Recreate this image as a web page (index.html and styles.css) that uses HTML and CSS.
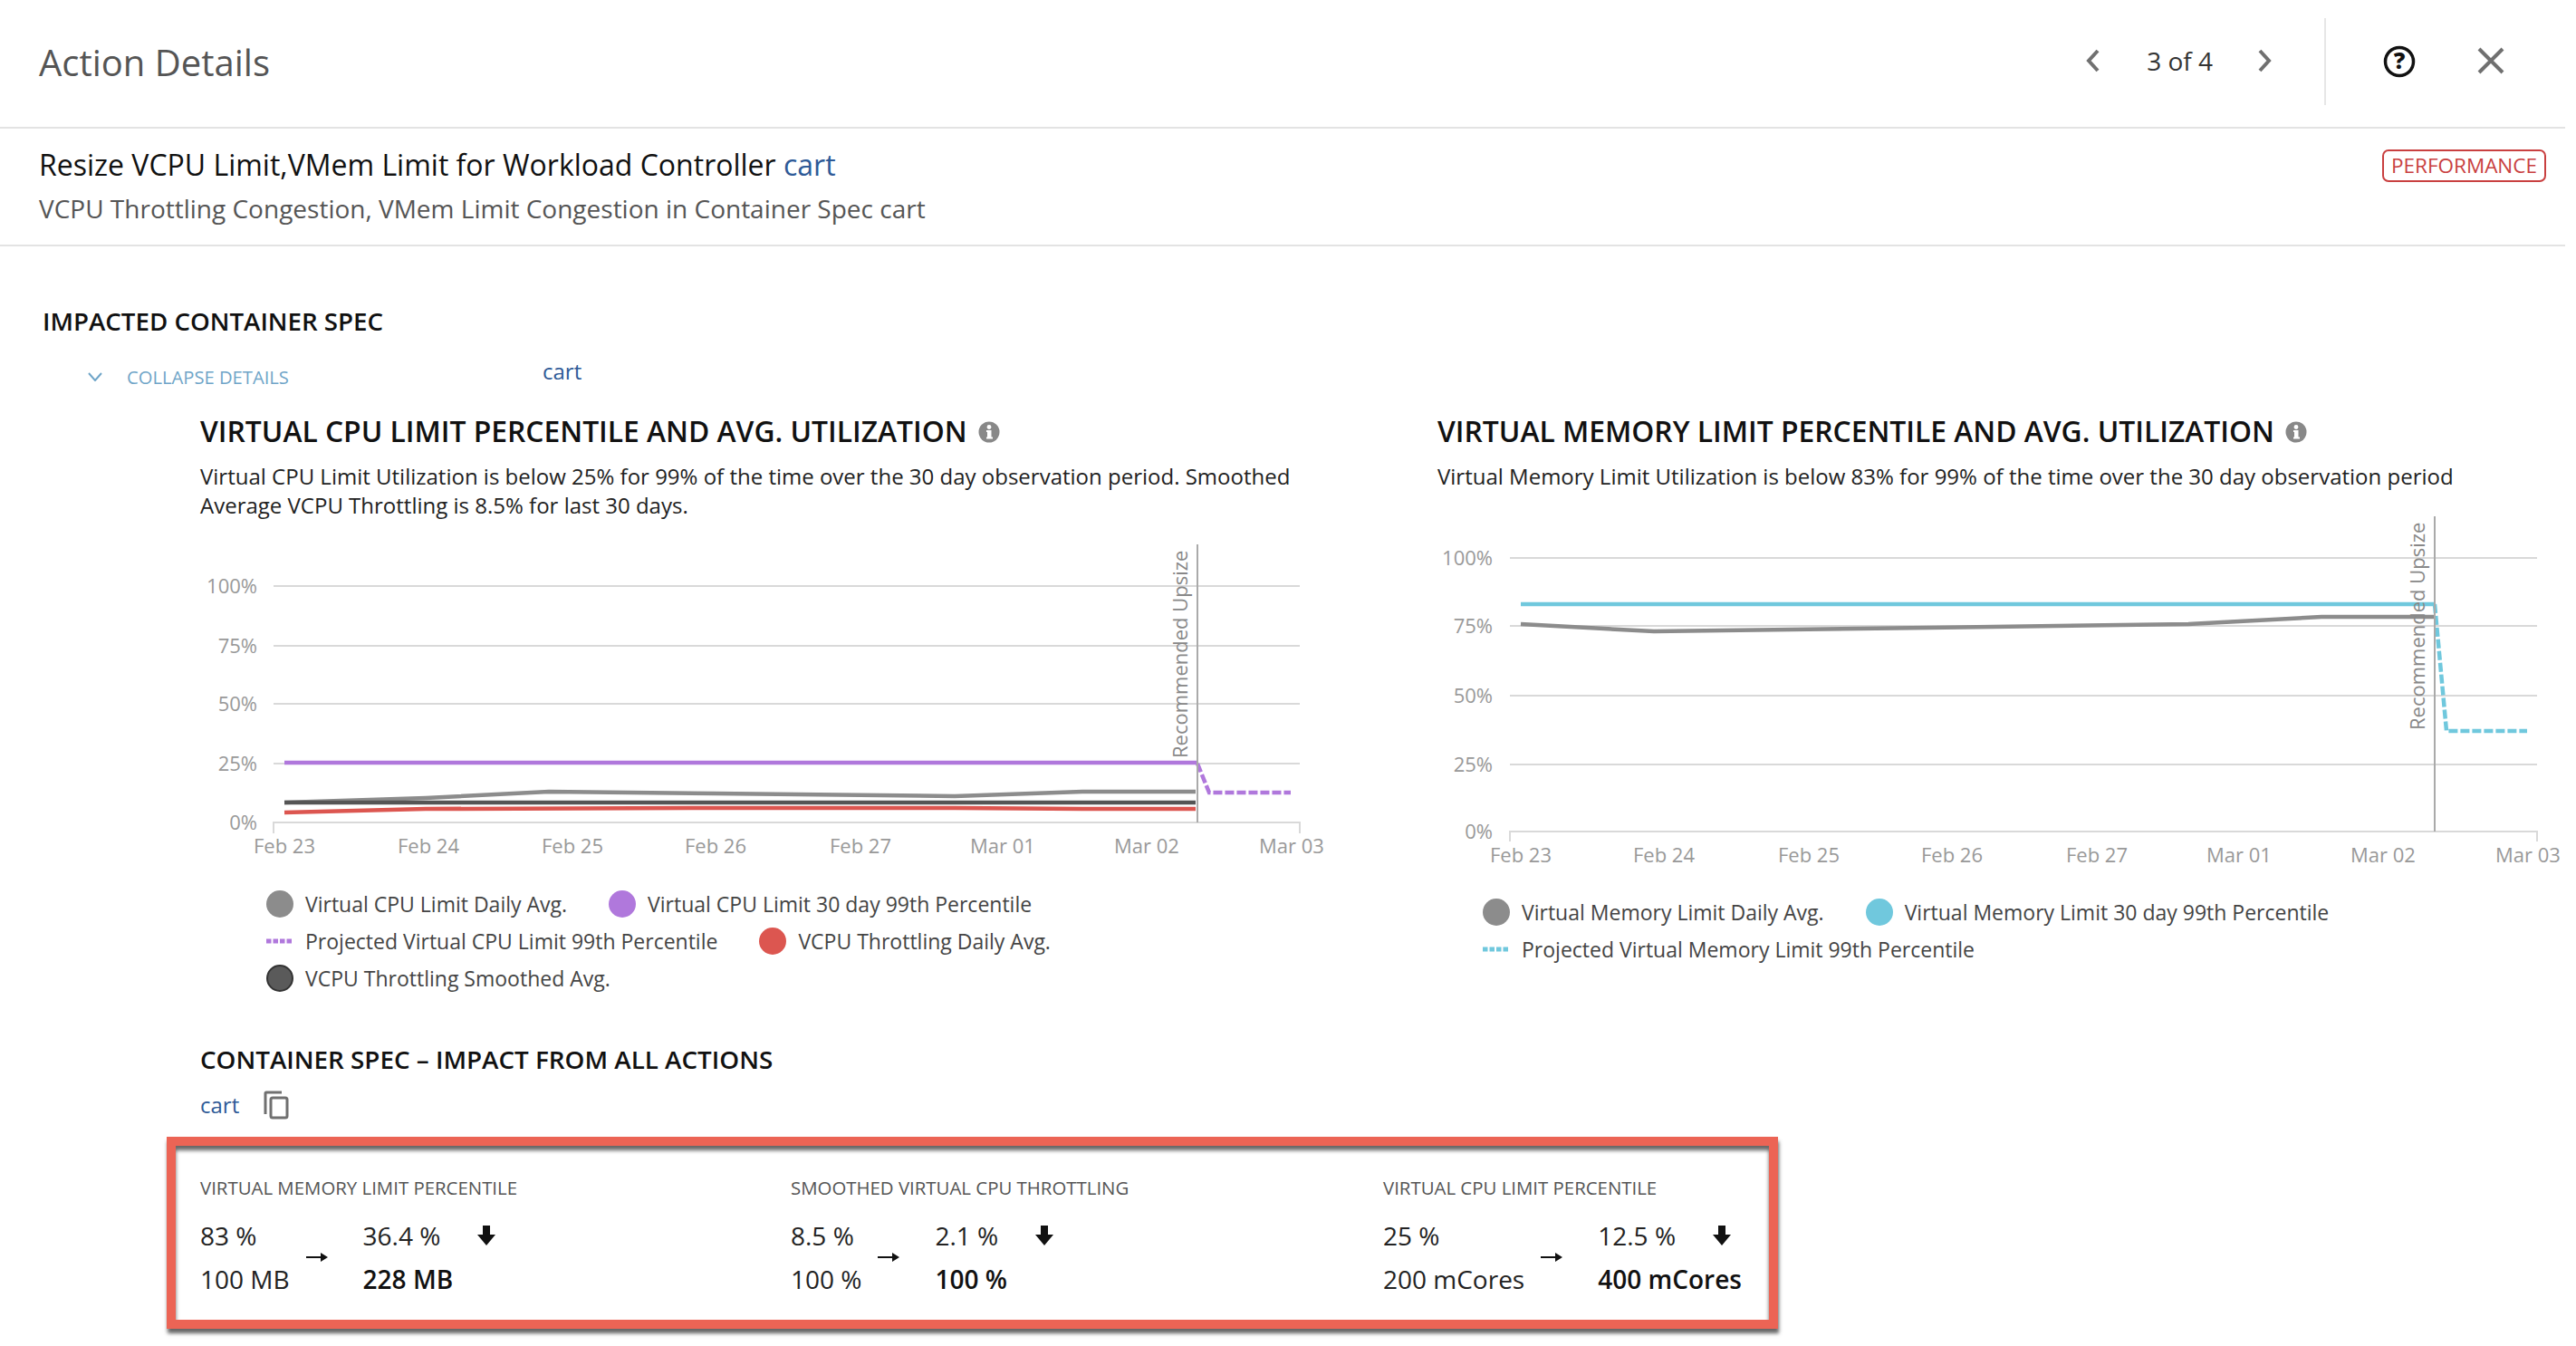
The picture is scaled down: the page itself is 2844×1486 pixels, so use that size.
FILE: index.html
```html
<!DOCTYPE html>
<html lang="en">
<head>
  <meta charset="UTF-8">
  <title>Action Details</title>
  <link rel="stylesheet" href="styles.css">
</head>
<body>
  <div class="page">
    <header class="top">
      <div class="top-title">Action Details</div>
      <div class="pager">
        <svg class="icon-chev" width="20" height="28" viewBox="0 0 20 28"><path d="M15 3 L5 14 L15 25" /></svg>
        <span class="pager-text">3 of 4</span>
        <svg class="icon-chev" width="20" height="28" viewBox="0 0 20 28"><path d="M5 3 L15 14 L5 25" /></svg>
      </div>
      <div class="top-divider"></div>
      <svg class="icon-help" width="36" height="36" viewBox="0 0 36 36">
        <circle cx="18" cy="18" r="15.5" />
        <text x="18" y="26">?</text>
      </svg>
      <svg class="icon-close" width="30" height="30" viewBox="0 0 30 30"><path d="M2 2 L28 28 M28 2 L2 28" /></svg>
    </header>

    <section class="summary">
      <div>
        <div class="summary-title">Resize VCPU Limit,VMem Limit for Workload Controller <a class="link">cart</a></div>
        <div class="summary-sub">VCPU Throttling Congestion, VMem Limit Congestion in Container Spec cart</div>
      </div>
      <span class="badge">PERFORMANCE</span>
    </section>

    <main class="content">
      <h3 class="section-head">IMPACTED CONTAINER SPEC</h3>
      <div class="collapse-row">
        <svg class="icon-down" width="16" height="10" viewBox="0 0 16 10"><path d="M1 1 L8 9 L15 1" /></svg>
        <span class="collapse-text">COLLAPSE DETAILS</span>
        <a class="link collapse-link">cart</a>
      </div>

      <div class="charts">
        <div class="chart-col">
          <h3 class="chart-title">VIRTUAL CPU LIMIT PERCENTILE AND AVG. UTILIZATION
            <svg class="icon-info" width="24" height="24" viewBox="0 0 24 24"><circle class="info-bg" cx="12" cy="12" r="11.5" /><rect x="10" y="10" width="4.5" height="9" /><rect x="9" y="10" width="3" height="2" /><rect x="9" y="17.5" width="7" height="2" /><circle cx="12" cy="6.5" r="2.4" /></svg>
          </h3>
          <p class="chart-desc">Virtual CPU Limit Utilization is below 25% for 99% of the time over the 30 day observation period. Smoothed Average VCPU Throttling is 8.5% for last 30 days.</p>
          <svg class="chart" width="1245" height="360" viewBox="221 590 1245 360">
            <g class="grid">
              <line x1="302" y1="648" x2="1435" y2="648" />
              <line x1="302" y1="714" x2="1435" y2="714" />
              <line x1="302" y1="778" x2="1435" y2="778" />
              <line x1="302" y1="844" x2="1435" y2="844" />
              <path d="M302 921 V909 H1435 V921" />
            </g>
            <g class="tick ytick">
              <text x="284" y="656">100%</text>
              <text x="284" y="722">75%</text>
              <text x="284" y="786">50%</text>
              <text x="284" y="852">25%</text>
              <text x="284" y="917">0%</text>
            </g>
            <g class="tick xtick">
              <text x="314" y="943">Feb 23</text>
              <text x="473" y="943">Feb 24</text>
              <text x="632" y="943">Feb 25</text>
              <text x="790" y="943">Feb 26</text>
              <text x="950" y="943">Feb 27</text>
              <text x="1107" y="943">Mar 01</text>
              <text x="1266" y="943">Mar 02</text>
              <text x="1426" y="943">Mar 03</text>
            </g>
            <path class="series s-gray" d="M314 887 L470 882 L606 875 L790 877 L1054 880 L1195 875 L1320 875" />
            <path class="series s-dark" d="M314 887 L1320 887" />
            <path class="series s-red" d="M314 898 L470 894 L790 893 L1054 893 L1195 894 L1320 894" />
            <path class="series s-purple" d="M314 843 L1322 843" />
            <path class="dash s-purple" d="M1322 844 L1335 876 L1425 876" />
            <line class="marker" x1="1322" y1="602" x2="1322" y2="909" />
            <text class="marker-text" transform="translate(1311 838) rotate(-90)">Recommended Upsize</text>
          </svg>
          <div class="legend legend-cpu">
            <div class="legend-item"><span class="dot c-gray"></span>Virtual CPU Limit Daily Avg.</div>
            <div class="legend-item"><span class="dot c-purple"></span>Virtual CPU Limit 30 day 99th Percentile</div>
            <div class="legend-item"><svg class="legend-dash" width="30" height="6" viewBox="0 0 30 6"><line class="s-purple" x1="0" y1="3" x2="30" y2="3" /></svg>Projected Virtual CPU Limit 99th Percentile</div>
            <div class="legend-item"><span class="dot c-red"></span>VCPU Throttling Daily Avg.</div>
            <div class="legend-item"><span class="dot c-dark"></span>VCPU Throttling Smoothed Avg.</div>
          </div>
        </div>

        <div class="chart-col">
          <h3 class="chart-title">VIRTUAL MEMORY LIMIT PERCENTILE AND AVG. UTILIZATION
            <svg class="icon-info" width="24" height="24" viewBox="0 0 24 24"><circle class="info-bg" cx="12" cy="12" r="11.5" /><rect x="10" y="10" width="4.5" height="9" /><rect x="9" y="10" width="3" height="2" /><rect x="9" y="17.5" width="7" height="2" /><circle cx="12" cy="6.5" r="2.4" /></svg>
          </h3>
          <p class="chart-desc">Virtual Memory Limit Utilization is below 83% for 99% of the time over the 30 day observation period</p>
          <svg class="chart" width="1245" height="401" viewBox="1587 558 1245 401">
            <g class="grid">
              <line x1="1667" y1="617" x2="2801" y2="617" />
              <line x1="1667" y1="692" x2="2801" y2="692" />
              <line x1="1667" y1="769" x2="2801" y2="769" />
              <line x1="1667" y1="845" x2="2801" y2="845" />
              <path d="M1667 930 V919 H2801 V930" />
            </g>
            <g class="tick ytick">
              <text x="1648" y="625">100%</text>
              <text x="1648" y="700">75%</text>
              <text x="1648" y="777">50%</text>
              <text x="1648" y="853">25%</text>
              <text x="1648" y="927">0%</text>
            </g>
            <g class="tick xtick">
              <text x="1679" y="953">Feb 23</text>
              <text x="1837" y="953">Feb 24</text>
              <text x="1997" y="953">Feb 25</text>
              <text x="2155" y="953">Feb 26</text>
              <text x="2315" y="953">Feb 27</text>
              <text x="2472" y="953">Mar 01</text>
              <text x="2631" y="953">Mar 02</text>
              <text x="2791" y="953">Mar 03</text>
            </g>
            <path class="series s-gray" d="M1679 690 L1826 698 L2130 694 L2416 690 L2563 682 L2687 682" />
            <path class="series s-teal" d="M1679 668 L2687 668" />
            <path class="dash s-teal" d="M2688 668 L2701 808 L2790 808" />
            <line class="marker" x1="2688" y1="571" x2="2688" y2="919" />
            <text class="marker-text" transform="translate(2677 807) rotate(-90)">Recommended Upsize</text>
          </svg>
          <div class="legend legend-mem">
            <div class="legend-item"><span class="dot c-gray"></span>Virtual Memory Limit Daily Avg.</div>
            <div class="legend-item"><span class="dot c-teal"></span>Virtual Memory Limit 30 day 99th Percentile</div>
            <div class="legend-item"><svg class="legend-dash" width="30" height="6" viewBox="0 0 30 6"><line class="s-teal" x1="0" y1="3" x2="30" y2="3" /></svg>Projected Virtual Memory Limit 99th Percentile</div>
          </div>
        </div>
      </div>

      <div class="impact">
        <h3 class="impact-head">CONTAINER SPEC – IMPACT FROM ALL ACTIONS</h3>
        <div class="impact-link">
          <a class="link">cart</a>
          <svg class="icon-copy" width="28" height="32" viewBox="0 0 28 32"><path d="M2 26 V3 Q2 2 3 2 H20" /><rect x="8" y="8" width="18" height="22" rx="2" /></svg>
        </div>
      </div>

      <div class="impact-box">
        <div class="metric">
          <div class="metric-label">VIRTUAL MEMORY LIMIT PERCENTILE</div>
          <div class="metric-body">
            <div class="metric-vals"><div>83 %</div><div>100 MB</div></div>
            <svg class="icon-right" width="24" height="14" viewBox="0 0 24 14"><path d="M0 6 H16 V2 L24 7 L16 12 V8 H0 Z" /></svg>
            <div class="metric-vals"><div class="metric-top">36.4 %<svg class="icon-arrow" width="22" height="24" viewBox="0 0 22 24"><path d="M7 1 H15 V11 H21 L11 23 L1 11 H7 Z" /></svg></div><div class="metric-new">228 MB</div></div>
          </div>
        </div>
        <div class="metric">
          <div class="metric-label">SMOOTHED VIRTUAL CPU THROTTLING</div>
          <div class="metric-body">
            <div class="metric-vals"><div>8.5 %</div><div>100 %</div></div>
            <svg class="icon-right" width="24" height="14" viewBox="0 0 24 14"><path d="M0 6 H16 V2 L24 7 L16 12 V8 H0 Z" /></svg>
            <div class="metric-vals"><div class="metric-top">2.1 %<svg class="icon-arrow" width="22" height="24" viewBox="0 0 22 24"><path d="M7 1 H15 V11 H21 L11 23 L1 11 H7 Z" /></svg></div><div class="metric-new">100 %</div></div>
          </div>
        </div>
        <div class="metric">
          <div class="metric-label">VIRTUAL CPU LIMIT PERCENTILE</div>
          <div class="metric-body">
            <div class="metric-vals"><div>25 %</div><div>200 mCores</div></div>
            <svg class="icon-right" width="24" height="14" viewBox="0 0 24 14"><path d="M0 6 H16 V2 L24 7 L16 12 V8 H0 Z" /></svg>
            <div class="metric-vals"><div class="metric-top">12.5 %<svg class="icon-arrow" width="22" height="24" viewBox="0 0 22 24"><path d="M7 1 H15 V11 H21 L11 23 L1 11 H7 Z" /></svg></div><div class="metric-new">400 mCores</div></div>
          </div>
        </div>
      </div>
    </main>
  </div>
</body>
</html>
```

FILE: styles.css
```css
html, body {
  margin: 0;
  height: 100%;
  overflow: hidden;
  background: #fff;
}

body {
  font-family: "Open Sans", "Liberation Sans", sans-serif;
  color: #222;
}

.page {
  width: 2832px;
}

.link {
  color: #2e5a97;
}

.top {
  height: 136px;
  padding: 0 0 4px 43px;
  display: flex;
  align-items: center;
  border-bottom: 2px solid #e3e3e3;
}

.top-title {
  flex: 1;
  font-size: 40px;
  color: #555;
}

.pager {
  display: flex;
  align-items: center;
  margin: 0 56px 3px 0;
}

.pager-text {
  font-size: 28px;
  margin: 0 47px 0 49px;
  color: #333;
}

.icon-chev path {
  fill: none;
  stroke: #707070;
  stroke-width: 4;
}

.top-divider {
  width: 2px;
  height: 96px;
  background: #e6e6e6;
  margin-right: 63px;
}

.icon-help {
  margin-right: 68px;
}

.icon-help circle {
  fill: none;
  stroke: #111;
  stroke-width: 3.5;
}

.icon-help text {
  font-size: 25px;
  font-weight: 800;
  text-anchor: middle;
  fill: #111;
}

.icon-close {
  margin: 0 67px 3px 0;
}

.icon-close path {
  fill: none;
  stroke: #707070;
  stroke-width: 4;
}

.summary {
  height: 128px;
  display: flex;
  justify-content: space-between;
  align-items: flex-start;
  border-bottom: 2px solid #e3e3e3;
  padding: 0 21px 0 43px;
}

.summary-title {
  font-size: 32px;
  line-height: 46px;
  margin-top: 17px;
  color: #111;
}

.summary-sub {
  font-size: 28px;
  line-height: 44px;
  margin-top: 3px;
  color: #555;
}

.badge {
  margin-top: 23px;
  border: 2px solid #c94040;
  border-radius: 7px;
  padding: 0 8px;
  font-size: 22.5px;
  line-height: 32px;
  color: #c94040;
}

.content {
  padding-top: 60px;
}

.section-head {
  margin: 0 0 0 47px;
  font-size: 27.7px;
  line-height: 44px;
  font-weight: 600;
  color: #111;
}

.collapse-row {
  display: flex;
  align-items: center;
  height: 48px;
  margin: 16px 0 0 97px;
}

.icon-down path {
  fill: none;
  stroke: #6fa5c8;
  stroke-width: 2;
}

.collapse-text {
  width: 459px;
  margin-left: 27px;
  font-size: 20.2px;
  color: #6fa5c8;
}

.collapse-link {
  font-size: 24px;
  margin-top: -14px;
}

.charts {
  display: flex;
  margin: 14px 0 0 221px;
}

.chart-col {
  flex: none;
  width: 1366px;
}

.chart-title {
  margin: 0;
  font-size: 31.8px;
  line-height: 44px;
  font-weight: 600;
  color: #111;
}

.icon-info {
  margin-left: 4px;
  vertical-align: -1px;
}

.icon-info .info-bg {
  fill: #888;
}

.icon-info rect, .icon-info circle {
  fill: #fff;
}

.chart-desc {
  margin: 12px 0 0;
  max-width: 1240px;
  font-size: 24px;
  line-height: 32px;
  color: #222;
}

.chart {
  display: block;
  margin-top: 15px;
}

.grid line, .grid path {
  fill: none;
  stroke: #d9d9d9;
  stroke-width: 2;
}

.tick text {
  font-size: 22px;
  fill: #999;
}

.ytick text {
  text-anchor: end;
}

.xtick text {
  text-anchor: middle;
}

.series {
  fill: none;
  stroke-width: 4.5;
}

.dash {
  fill: none;
  stroke-width: 4.5;
  stroke-dasharray: 10 3;
}

.s-gray { stroke: #8c8c8c; }
.s-dark { stroke: #555; }
.s-red { stroke: #dc5650; }
.s-purple { stroke: #b078dc; }
.s-teal { stroke: #70c8dd; }

.marker {
  stroke: #aaa;
  stroke-width: 2;
}

.marker-text {
  font-size: 22px;
  fill: #888;
}

.legend {
  display: flex;
  flex-wrap: wrap;
  column-gap: 46px;
  width: 1000px;
  margin-top: 28px;
}

.legend-cpu {
  margin-left: 73px;
}

.legend-mem {
  margin-left: 50px;
}

.legend-item {
  display: flex;
  align-items: center;
  height: 41px;
  font-size: 23px;
  color: #444;
}

.dot {
  width: 30px;
  height: 30px;
  border-radius: 50%;
  margin-right: 13px;
  box-sizing: border-box;
}

.c-gray { background: #8c8c8c; }
.c-purple { background: #b078dc; }
.c-red { background: #dc5650; }
.c-teal { background: #70c8dd; }
.c-dark { background: #5a5a5a; border: 2px solid #333; }

.legend-dash {
  margin-right: 13px;
}

.legend-dash line {
  stroke-width: 5;
  stroke-dasharray: 5.5 2;
}

.impact {
  margin: 47px 0 0 221px;
}

.impact-head {
  margin: 0;
  font-size: 27.8px;
  line-height: 44px;
  font-weight: 600;
  color: #111;
}

.impact-link {
  display: flex;
  align-items: center;
  gap: 27px;
  margin-top: 12px;
  font-size: 24px;
}

.icon-copy path, .icon-copy rect {
  fill: none;
  stroke: #707070;
  stroke-width: 3;
}

.impact-box {
  margin: 19px 0 0 184px;
  width: 1779px;
  height: 212px;
  box-sizing: border-box;
  border: 10px solid #ec6455;
  box-shadow: 1px 5px 4px #666, inset 0 5px 4px #666;
  background: #fff;
  display: grid;
  grid-template-columns: 652px 654px 1fr;
  padding: 33px 0 0 27px;
}

.metric-label {
  font-size: 20.4px;
  line-height: 26px;
  color: #555;
}

.metric-body {
  display: flex;
  align-items: center;
  margin-top: 16px;
}

.metric-vals {
  font-size: 28px;
  line-height: 48px;
  color: #222;
}

.icon-right {
  margin: 0 39px 0 18px;
}

.icon-right path {
  fill: #111;
}

.metric-top {
  display: flex;
  align-items: center;
  gap: 40px;
}

.icon-arrow path {
  fill: #111;
}

.metric-new {
  font-weight: 600;
  color: #111;
}
```
